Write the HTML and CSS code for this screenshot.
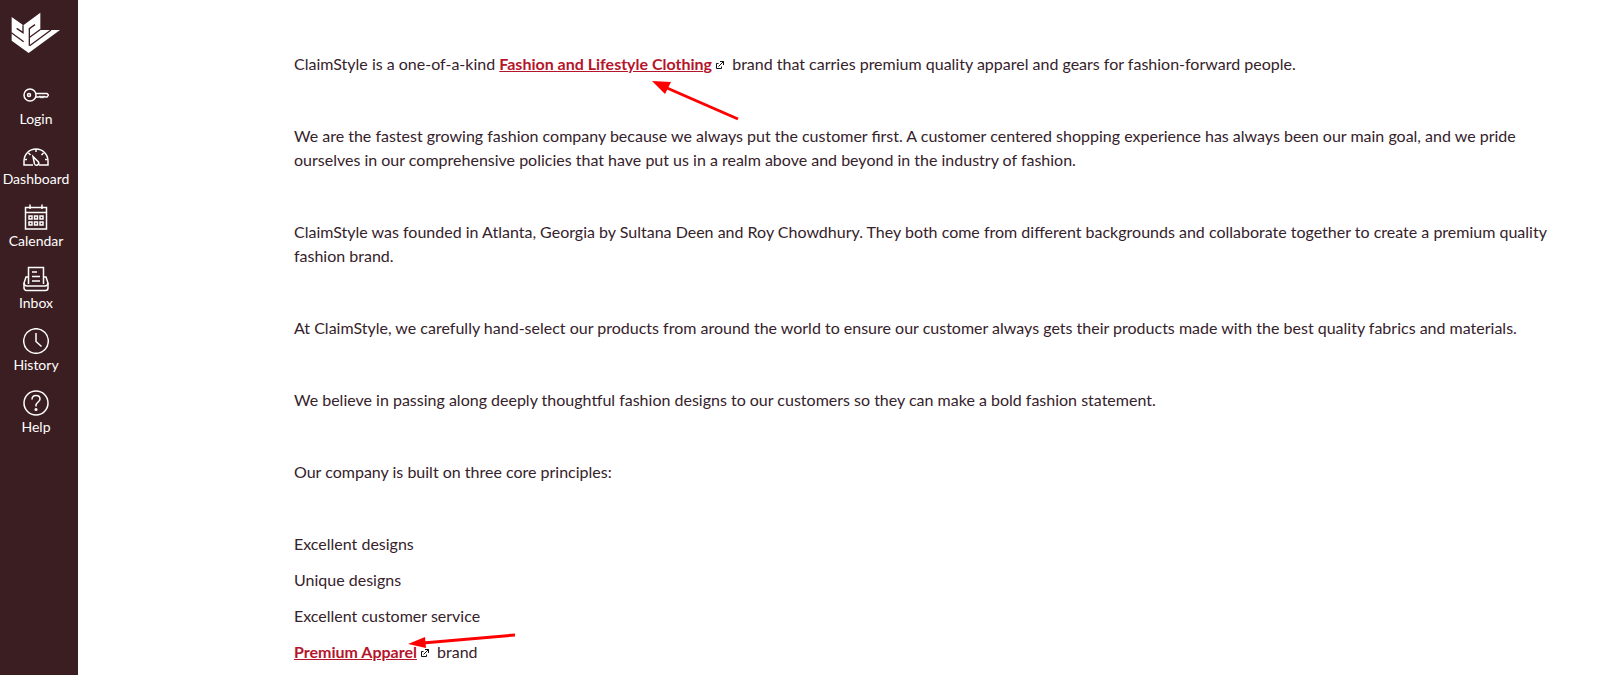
FILE: index.html
```html
<!DOCTYPE html>
<html lang="en">
<head>
    <meta charset="UTF-8">
    <meta name="viewport" content="width=device-width, initial-scale=1.0">
    <title>ClaimStyle</title>
    <link rel="stylesheet" href="styles.css">
</head>
<body>
    <!-- Global navigation -->
    <nav class="sidebar" aria-label="Global navigation">
        <a class="logo" href="#" aria-label="Home">
            <svg width="50" height="42" viewBox="33 36 150 126">
                <path fill="#fff" d="M35 51 L70 76 L121 38 V90 H180 L86 159 L35 122 Z"/>
                <path class="logo-gap" d="M34 98 L71 125 M50 85 L69 98 V76 M88 137 V86 L105 74 M89 112 L122 88 M89 137 L153 90"/>
            </svg>
        </a>
        <ul class="menu">
            <li>
                <a class="menu-item" href="#">
                    <svg class="icon" viewBox="0 0 26 26">
                        <circle cx="7" cy="13" r="6"/>
                        <circle cx="6" cy="13" r="1.500"/>
                        <path d="M12.500 11.500 H24 L25.500 13 L24 15 H22 L21 14.500 L20 15.500 L19 14.500 L18 15.500 L17 14.500 L16 15 H12.500"/>
                    </svg>
                    <span>Login</span>
                </a>
            </li>
            <li>
                <a class="menu-item" href="#">
                    <svg class="icon icon-short" viewBox="0 0 26 24">
                        <path d="M10 21 H1 V17 A12 12 0 0 1 25 17 V21 H16"/>
                        <path d="M10 12.500 L15.500 18 A2.200 2.200 0 1 1 11.500 20 Z M13 5 V8 M5.500 9 L7.500 11 M20.500 9 L18.500 11 M1.500 15.500 H4 M24.500 15.500 H22"/>
                    </svg>
                    <span>Dashboard</span>
                </a>
            </li>
            <li>
                <a class="menu-item" href="#">
                    <svg class="icon" viewBox="0 0 26 26">
                        <path d="M2.500 3.500 H23.500 V25 H2.500 Z M2.500 8.500 H23.500 M7 0.500 V5 M19 0.500 V5"/>
                        <path d="M6 12 h3 v3 h-3 z M11.500 12 h3 v3 h-3 z M17 12 h3 v3 h-3 z M6 18 h3 v3 h-3 z M11.500 18 h3 v3 h-3 z M17 18 h3 v3 h-3 z"/>
                    </svg>
                    <span>Calendar</span>
                </a>
            </li>
            <li>
                <a class="menu-item" href="#">
                    <svg class="icon" viewBox="0 0 26 26">
                        <path d="M5.500 18 V1.500 H20.500 V18 M5 11 H3 L1 17 V22 A2.500 2.500 0 0 0 3.500 24.500 H22.500 A2.500 2.500 0 0 0 25 22 V17 L23 11 H21"/>
                        <path d="M1 17 Q1.500 20 4 20 H22 Q24.500 20 25 17 M9 6 H14 M9 10.500 H17 M9 15 H17"/>
                    </svg>
                    <span>Inbox</span>
                </a>
            </li>
            <li>
                <a class="menu-item" href="#">
                    <svg class="icon" viewBox="0 0 26 26">
                        <circle cx="13" cy="13" r="12.300"/>
                        <path d="M13 5 V13.500 L18.500 18.500"/>
                    </svg>
                    <span>History</span>
                </a>
            </li>
            <li>
                <a class="menu-item" href="#">
                    <svg class="icon" viewBox="0 0 26 26">
                        <circle cx="13" cy="13" r="12"/>
                        <path d="M9 9.500 C9 4 17 4.500 17 9 C17 12 13 12 13 15.500 V16.500"/>
                        <circle cx="13" cy="19.500" r="0.800" fill="#fff"/>
                    </svg>
                    <span>Help</span>
                </a>
            </li>
        </ul>
    </nav>

    <!-- Page text -->
    <main class="content">
        <p>
            ClaimStyle is a one-of-a-kind
            <a class="link" href="#">Fashion and Lifestyle Clothing</a><svg class="external" viewBox="0 0 10 10"><path d="M3.500 3.500 H1.500 V8.500 H6.500 V6.500 M3.500 6.500 L8.500 1.500 M5 1.500 H8.500 V5"/></svg>
            brand that carries premium quality apparel and gears for fashion-forward people.
            <svg class="arrow arrow-clothing" width="90" height="42" viewBox="0 0 90 42">
                <path d="M15 8 L86 39" stroke="#f00" stroke-width="3"/>
                <path d="M0 1 L19 2 L13 14 Z" fill="#f00"/>
            </svg>
        </p>
        <p>We are the fastest growing fashion company because we always put the customer first. A customer centered shopping experience has always been our main goal, and we pride ourselves in our comprehensive policies that have put us in a realm above and beyond in the industry of fashion.</p>
        <p>ClaimStyle was founded in Atlanta, Georgia by Sultana Deen and Roy Chowdhury. They both come from different backgrounds and collaborate together to create a premium quality fashion brand.</p>
        <p>At ClaimStyle, we carefully hand-select our products from around the world to ensure our customer always gets their products made with the best quality fabrics and materials.</p>
        <p>We believe in passing along deeply thoughtful fashion designs to our customers so they can make a bold fashion statement.</p>
        <p>Our company is built on three core principles:</p>
        <div class="principles">
            <p>Excellent designs</p>
            <p>Unique designs</p>
            <p>Excellent customer service</p>
            <p>
                <a class="link" href="#">Premium Apparel</a><svg class="external" viewBox="0 0 10 10"><path d="M3.500 3.500 H1.500 V8.500 H6.500 V6.500 M3.500 6.500 L8.500 1.500 M5 1.500 H8.500 V5"/></svg>
                brand
                <svg class="arrow arrow-apparel" width="110" height="16" viewBox="0 0 110 16">
                    <path d="M15 10 L107 2" stroke="#f00" stroke-width="3"/>
                    <path d="M0 11 L17 4 L18 15 Z" fill="#f00"/>
                </svg>
            </p>
        </div>
    </main>
</body>
</html>
```

FILE: styles.css
```css
* {
    box-sizing: border-box;
}
body {
    margin: 0;
    display: flex;
    min-height: 100vh;
    font-family: Lato, "Liberation Sans", sans-serif;
    font-size: 16px;
    line-height: 24px;
    color: #35222b;
    background: #fff;
}
.sidebar {
    flex: none;
    width: 78px;
    padding: 12px 6px 0 0;
    background: #3b1e21;
}
.logo {
    display: flex;
    justify-content: center;
}
.logo-gap {
    fill: none;
    stroke: #3b1e21;
    stroke-width: 4;
}
.menu {
    list-style: none;
    margin: 28px 0 0;
    padding: 0;
    display: flex;
    flex-direction: column;
    gap: 17px;
}
.menu-item {
    display: flex;
    flex-direction: column;
    align-items: center;
    gap: 3px;
    font-size: 14px;
    line-height: 16px;
    color: #fff;
    text-decoration: none;
}
.icon {
    width: 26px;
    height: 26px;
    fill: none;
    stroke: #fff;
    stroke-width: 1.5;
}
.icon-short {
    height: 24px;
}
.content {
    flex: 1;
    min-width: 0;
    padding: 52px 48px 0 216px;
}
.content p {
    position: relative;
    margin: 0 0 48px;
}
.content .principles p {
    margin-bottom: 12px;
}
.content .principles p:last-child {
    margin-bottom: 0;
}
.link {
    color: #b5152b;
    font-weight: bold;
    text-decoration: underline;
}
.external {
    width: 10px;
    height: 10px;
    margin: 0 3px;
    fill: none;
    stroke: #111;
}
/* Red pointers drawn over the text */
.arrow {
    position: absolute;
}
.arrow-clothing {
    left: 358px;
    top: 28px;
}
.arrow-apparel {
    left: 114px;
    top: -7px;
}
```
